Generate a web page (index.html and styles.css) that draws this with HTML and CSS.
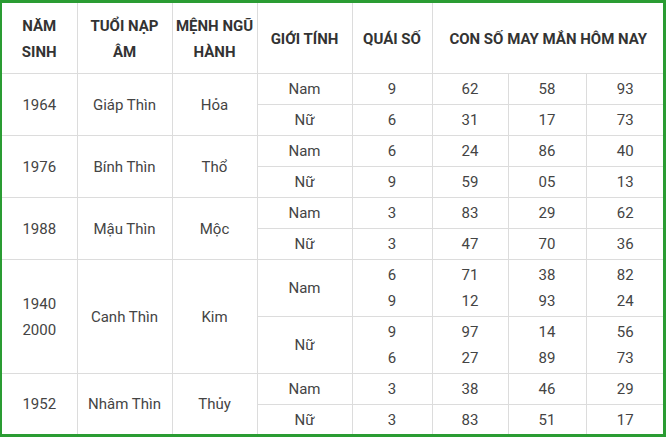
FILE: index.html
```html
<!DOCTYPE html>
<html lang="vi">
<head>
<meta charset="utf-8">
<link rel="stylesheet" href="styles.css">
</head>
<body>
<div class="frame">
<table class="lucky">
<colgroup>
<col class="c1"><col class="c2"><col class="c3"><col class="c4"><col class="c5"><col class="c6"><col class="c7"><col class="c8">
</colgroup>
<thead>
<tr class="head">
<th>NĂM<br>SINH</th>
<th>TUỔI NẠP<br>ÂM</th>
<th>MỆNH NGŨ<br>HÀNH</th>
<th>GIỚI TÍNH</th>
<th>QUÁI SỐ</th>
<th colspan="3">CON SỐ MAY MẮN HÔM NAY</th>
</tr>
</thead>
<tbody>
<tr class="r"><td rowspan="2">1964</td><td rowspan="2">Giáp Thìn</td><td rowspan="2">Hỏa</td><td>Nam</td><td>9</td><td>62</td><td>58</td><td>93</td></tr>
<tr class="r"><td>Nữ</td><td>6</td><td>31</td><td>17</td><td>73</td></tr>
<tr class="r"><td rowspan="2">1976</td><td rowspan="2">Bính Thìn</td><td rowspan="2">Thổ</td><td>Nam</td><td>6</td><td>24</td><td>86</td><td>40</td></tr>
<tr class="r"><td>Nữ</td><td>9</td><td>59</td><td>05</td><td>13</td></tr>
<tr class="r"><td rowspan="2">1988</td><td rowspan="2">Mậu Thìn</td><td rowspan="2">Mộc</td><td>Nam</td><td>3</td><td>83</td><td>29</td><td>62</td></tr>
<tr class="r"><td>Nữ</td><td>3</td><td>47</td><td>70</td><td>36</td></tr>
<tr class="r2"><td rowspan="2">1940<br>2000</td><td rowspan="2">Canh Thìn</td><td rowspan="2">Kim</td><td>Nam</td><td>6<br>9</td><td>71<br>12</td><td>38<br>93</td><td>82<br>24</td></tr>
<tr class="r2"><td>Nữ</td><td>9<br>6</td><td>97<br>27</td><td>14<br>89</td><td>56<br>73</td></tr>
<tr class="r"><td rowspan="2">1952</td><td rowspan="2">Nhâm Thìn</td><td rowspan="2">Thủy</td><td>Nam</td><td>3</td><td>38</td><td>46</td><td>29</td></tr>
<tr class="r rlast"><td>Nữ</td><td>3</td><td>83</td><td>51</td><td>17</td></tr>
</tbody>
</table>
</div>
</body>
</html>
```

FILE: styles.css
```css
html, body {
  margin: 0;
  padding: 0;
  background: #fff;
}
.frame {
  width: 661px;
  height: 431px;
  border-style: solid;
  border-color: #2a9c33;
  border-width: 3px 3px 3px 2px;
  overflow: hidden;
}
.lucky {
  border-collapse: collapse;
  table-layout: fixed;
  width: 662px;
  margin: 0 -1px 0 0;
  font-family: Roboto, "Noto Sans", sans-serif;
  font-size: 15px;
  color: #444;
}
.c1 { width: 75px; }
.c2 { width: 95px; }
.c3 { width: 85px; }
.c4 { width: 95px; }
.c5 { width: 80px; }
.c6 { width: 76px; }
.c7 { width: 78px; }
.c8 { width: 78px; }
.lucky th, .lucky td {
  border: 1px solid #dcdcdc;
  text-align: center;
  vertical-align: middle;
  padding: 0;
}
.lucky tr > :first-child { border-left: none; }
.lucky tr > :last-child { border-right: none; }
.lucky thead th {
  border-top: none;
  font-weight: 700;
  color: #333;
  line-height: 26px;
  height: 68px;
  padding-top: 2px;
}
.lucky .r td { height: 30px; line-height: 20px; }
.lucky .r2 td { height: 56px; line-height: 26px; }
.lucky td[rowspan] { line-height: 26px; }
.lucky .rlast td { border-bottom: none; }
```
